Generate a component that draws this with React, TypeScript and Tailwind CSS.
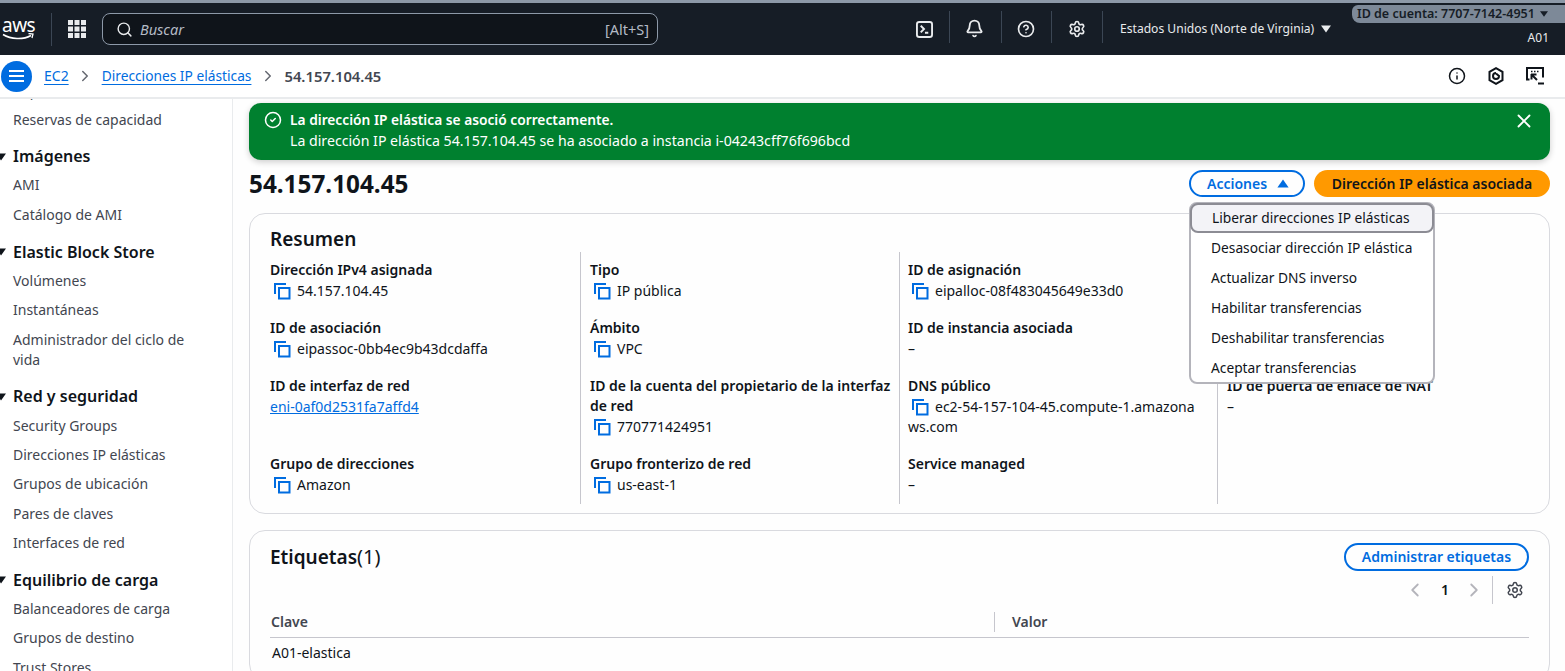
import { Bell, ChevronLeft, ChevronRight, CircleCheck, CircleHelp, Info, Search, Settings, X } from 'lucide-react';
import * as React from 'react';

const sidebarSections = [
  { title: 'Imágenes', items: ['AMI', 'Catálogo de AMI'] },
  { title: 'Elastic Block Store', items: ['Volúmenes', 'Instantáneas', 'Administrador del ciclo de vida'] },
  { title: 'Red y seguridad', items: ['Security Groups', 'Direcciones IP elásticas', 'Grupos de ubicación', 'Pares de claves', 'Interfaces de red'] },
  { title: 'Equilibrio de carga', items: ['Balanceadores de carga', 'Grupos de destino', 'Trust Stores'] },
];

const menuItems = [
  'Desasociar dirección IP elástica',
  'Actualizar DNS inverso',
  'Habilitar transferencias',
  'Deshabilitar transferencias',
  'Aceptar transferencias',
];

type Field = { label: string; value: string; copy?: boolean; link?: boolean; breakAll?: boolean };

const fields: Field[] = [
  { label: 'Dirección IPv4 asignada', value: '54.157.104.45', copy: true },
  { label: 'Tipo', value: 'IP pública', copy: true },
  { label: 'ID de asignación', value: 'eipalloc-08f483045649e33d0', copy: true },
  { label: 'Nombre de DNS inverso', value: '–' },
  { label: 'ID de asociación', value: 'eipassoc-0bb4ec9b43dcdaffa', copy: true },
  { label: 'Ámbito', value: 'VPC', copy: true },
  { label: 'ID de instancia asociada', value: '–' },
  { label: 'IP privada asociada', value: '–' },
  { label: 'ID de interfaz de red', value: 'eni-0af0d2531fa7affd4', link: true },
  { label: 'ID de la cuenta del propietario de la interfaz de red', value: '770771424951', copy: true },
  { label: 'DNS público', value: 'ec2-54-157-104-45.compute-1.amazonaws.com', copy: true, breakAll: true },
  { label: 'ID de puerta de enlace de NAT', value: '–' },
  { label: 'Grupo de direcciones', value: 'Amazon', copy: true },
  { label: 'Grupo fronterizo de red', value: 'us-east-1', copy: true },
  { label: 'Service managed', value: '–' },
];

function CopyIcon() {
  return (
    <svg width="18" height="18" viewBox="0 0 18 18" fill="none" stroke="#006ce0" strokeWidth="2" className="inline-block align-[-4px] mr-[6px] ml-[3px]">
      <path d="M2 12V2h11" />
      <rect x="6" y="6" width="10.5" height="10.5" />
    </svg>
  );
}

function Caret({ up, className }: { up?: boolean; className?: string }) {
  return (
    <svg width="10" height="8" viewBox="0 0 10 8" fill="currentColor" className={className}>
      <path d={up ? 'M5 0.5 10 7.5H0Z' : 'M0 0.5h10L5 7.5Z'} />
    </svg>
  );
}

function NavDivider() {
  return <div className="w-px h-[32px] bg-[#3b4654]" />;
}

function TopNav() {
  return (
    <div className="h-[55px] shrink-0 bg-[#161d26] border-t-[3px] border-[#8d99a8] flex items-center text-[#d5dbdb] relative">
      <div className="w-[52px] h-[33px] flex flex-col items-start justify-center border-r border-[#3b4654] pl-[2px]">
        <span className="text-[19px] leading-[15px] text-white tracking-[-0.5px]">aws</span>
        <svg width="32" height="8" viewBox="0 0 32 8" fill="none">
          <path d="M1 1.5c8 5 20 5.5 28 1" stroke="#fff" strokeWidth="1.5" />
          <path d="M26.500 0.500 31 1 30 5" stroke="#fff" strokeWidth="1.3" />
        </svg>
      </div>
      <svg width="18" height="18" viewBox="0 0 18 18" fill="#e9ebed" className="ml-[16px]">
        <path d="M0 0h5v5H0zM6.500 0h5v5h-5zM13 0h5v5h-5zM0 6.500h5v5H0zM6.500 6.500h5v5h-5zM13 6.500h5v5h-5zM0 13h5v5H0zM6.500 13h5v5h-5zM13 13h5v5h-5z" />
      </svg>
      <div className="ml-[16px] w-[556px] h-[32px] rounded-lg border border-[#8d99a8] bg-[#0f141a] flex items-center pl-[13px] pr-[8px]">
        <Search size={17} strokeWidth={2} className="text-[#e9ebed]" />
        <span className="ml-[7px] text-[14.500px] italic text-[#b4bbc5]">Buscar</span>
        <span className="ml-auto text-[14.500px] text-[#b4bbc5]">[Alt+S]</span>
      </div>
      <svg width="17" height="17" viewBox="0 0 18 18" fill="none" stroke="#e9ebed" strokeWidth="2" className="absolute left-[916px] top-[18px]">
        <rect x="1" y="1" width="16" height="16" rx="2.500" />
        <path d="M5 5l3.500 3.500L5 12M9.500 12.500H13" />
      </svg>
      <div className="absolute left-[949px] top-[8px]"><NavDivider /></div>
      <Bell size={19} strokeWidth={2.300} className="absolute left-[965px] top-[16px] text-[#e9ebed]" />
      <div className="absolute left-[1001px] top-[8px]"><NavDivider /></div>
      <CircleHelp size={18} strokeWidth={2.200} className="absolute left-[1017px] top-[17px] text-[#e9ebed]" />
      <div className="absolute left-[1051px] top-[8px]"><NavDivider /></div>
      <Settings size={18} strokeWidth={2.200} className="absolute left-[1068px] top-[17px] text-[#e9ebed]" />
      <div className="absolute left-[1102px] top-[8px]"><NavDivider /></div>
      <div className="absolute left-[1120px] top-[16px] flex items-center gap-[7px] text-[12.100px] leading-5 text-[#e9ebed]">
        Estados Unidos (Norte de Virginia)
        <Caret className="text-[#e9ebed]" />
      </div>
      <div className="absolute right-0 top-[2px] w-[213px] h-[18px] bg-[#7d8998] rounded-bl-lg rounded-tl-md flex items-center pl-[5px] gap-[5px] text-[12.500px] font-semibold text-[#161d26]">
        ID de cuenta: 7707-7142-4951
        <Caret className="w-[8px]" />
      </div>
      <span className="absolute right-[16px] top-[27px] text-[12px] leading-4 text-[#e9ebed]">A01</span>
    </div>
  );
}

function Breadcrumbs() {
  return (
    <div className="h-[44px] shrink-0 bg-white border-b-2 border-[#e9ebed] flex items-center pl-[1px] pr-[21px] text-[13.750px]">
      <div className="w-[31px] h-[31px] rounded-full bg-[#006ce0] flex flex-col items-center justify-center gap-[3px]">
        <span className="w-[15px] h-[2px] bg-white" />
        <span className="w-[15px] h-[2px] bg-white" />
        <span className="w-[15px] h-[2px] bg-white" />
      </div>
      <a className="ml-[12px] text-[14px] text-[#006ce0] underline underline-offset-[3px]">EC2</a>
      <ChevronRight size={18} strokeWidth={2} className="mx-[7.500px] text-[#656871]" />
      <a className="text-[#006ce0] underline underline-offset-[3px]">Direcciones IP elásticas</a>
      <ChevronRight size={18} strokeWidth={2} className="mx-[7.500px] text-[#656871]" />
      <span className="text-[14.800px] font-semibold text-[#424650]">54.157.104.45</span>
      <div className="ml-auto flex items-center gap-[21px] text-[#0f141a]">
        <Info size={18} strokeWidth={2} />
        <svg width="18" height="18" viewBox="0 0 18 18" fill="none" stroke="currentColor" strokeWidth="2">
          <path d="M9 1.200l6.500 3.700v8.200L9 16.800l-6.500-3.700V4.900z" />
          <path d="M9 6a3 3 0 1 0 3 3L9 6.500" />
        </svg>
        <svg width="18" height="18" viewBox="0 0 18 18" fill="none" stroke="currentColor" strokeWidth="2">
          <path d="M3.500 12.500H1V1h16v9.500" />
          <path d="M5 4.500h1.500M8 4.500h1.500M11 4.500h1.500" strokeWidth="1.500" />
          <path d="M5.500 7.500l5.500 5.500M5 7.500h5.500M5.500 7v5.500M12 16.500h6" />
        </svg>
      </div>
    </div>
  );
}

function Sidebar() {
  return (
    <div className="w-[233px] shrink-0 border-r border-[#e9ebed] overflow-hidden text-[14px] text-[#424650]">
      <div className="-mt-[23px] pl-[13px]">
        <div className="h-[29.100px] flex items-center">Capacidad dedicada</div>
        <div className="h-[29.100px] flex items-center">Reservas de capacidad</div>
        {sidebarSections.map((section) => (
          <div key={section.title} className="mt-[7.500px]">
            <div className="h-[29.100px] flex items-center font-semibold text-[16px] text-[#0f141a] relative">
              <Caret className="absolute -left-[17px] top-[11px]" />
              {section.title}
            </div>
            {section.items.map((item) => (
              <div key={item} className="py-[4.700px] leading-5 w-[190px]">{item}</div>
            ))}
          </div>
        ))}
      </div>
    </div>
  );
}

function SummaryCell({ field, col }: { field: Field; col: number }) {
  const cellClass =
    col === 0
      ? 'pt-2 pb-[9px] pr-2'
      : col === 2
        ? 'pt-2 pb-[9px] pl-[8px] pr-2 border-l border-[#c6c6cd]'
        : 'pt-2 pb-[9px] pl-[9px] pr-2 border-l border-[#c6c6cd]';
  return (
    <div className={cellClass}>
      <div className="font-semibold mb-px">{field.label}</div>
      {field.link ? (
        <a className="text-[#006ce0] underline">{field.value}</a>
      ) : (
        <div className={field.breakAll ? 'break-all pr-[14px]' : ''}>
          {field.copy && <CopyIcon />}
          {field.value}
        </div>
      )}
    </div>
  );
}

function ActionsMenu() {
  return (
    <div className="absolute left-0 top-[32px] z-10 w-[246px] h-[182px] bg-white rounded-lg border-2 border-[#b4b4bb] text-[13.750px] text-[#0f141a]">
      <div className="-m-[1px] mb-0 h-[30px] pl-[20px] flex items-center bg-[#f3f3f7] rounded-lg border-2 border-[#8c8c94]">Liberar direcciones IP elásticas</div>
      <div className="pl-[20px]">
        {menuItems.map((item) => (
          <div key={item} className="h-[30.100px] flex items-center">{item}</div>
        ))}
      </div>
    </div>
  );
}

export default function App() {
  return (
    <div className="h-[671px] w-[1565px] overflow-hidden flex flex-col bg-white text-[14px] leading-5 text-[#0f141a] font-['Noto_Sans',sans-serif]">
      <TopNav />
      <Breadcrumbs />
      <div className="flex flex-1 min-h-0">
        <Sidebar />
        <div className="flex-1 pl-[16px] pr-[15px] pt-[4px] bg-[#fefefe]">
          {/* Flash message */}
          <div className="h-[57px] rounded-xl bg-[#00802f] text-white flex pl-[15px] pr-[15px] pt-[6px] shadow-[0_2px_6px_rgba(0,0,0,0.2)]">
            <CircleCheck size={18} strokeWidth={2} className="mt-[2px] mr-[8px] shrink-0" />
            <div className="leading-[22px]">
              <div className="font-semibold text-[13.750px]">La dirección IP elástica se asoció correctamente.</div>
              <div className="-mt-px text-[14.150px]">La dirección IP elástica 54.157.104.45 se ha asociado a instancia i-04243cff76f696bcd</div>
            </div>
            <X size={22} strokeWidth={2} className="ml-auto mt-[1px]" />
          </div>

          {/* Page header */}
          <div className="mt-[10px] h-[27px] flex items-center">
            <h1 className="text-[24.300px] font-bold">54.157.104.45</h1>
            <div className="ml-auto relative">
              <button className="w-[116px] h-[27px] rounded-full border-2 border-[#006ce0] text-[#006ce0] font-semibold flex items-center pl-[16px] gap-[10px]">
                Acciones
                <Caret up className="w-[12px] h-[9px]" />
              </button>
              <ActionsMenu />
            </div>
            <button className="ml-[9px] w-[236px] h-[27px] rounded-full bg-[#ff9900] font-semibold">Dirección IP elástica asociada</button>
          </div>

          {/* Summary */}
          <div className="mt-[16px] h-[301px] rounded-2xl border border-[#d9dadf] pt-3 pl-[20px] pr-[20px]">
            <h2 className="h-[26px] text-[19px] font-semibold leading-[26px]">Resumen</h2>
            <div className="grid grid-cols-[310px_319px_318px_1fr]">
              {fields.map((field, i) => (
                <SummaryCell key={field.label} field={field} col={i % 4} />
              ))}
              <div className="border-l border-[#c6c6cd]" />
            </div>
          </div>

          {/* Tags */}
          <div className="mt-[16px] h-[150px] rounded-2xl border border-[#d9dadf] pt-3 pl-[20px] pr-[20px]">
            <div className="h-[28px] flex items-center">
              <h2 className="text-[19px] font-semibold">Etiquetas<span className="text-[20px] font-normal">(1)</span></h2>
              <button className="ml-auto w-[185px] h-[28px] rounded-full border-2 border-[#006ce0] text-[#006ce0] font-semibold">Administrar etiquetas</button>
            </div>
            <div className="mt-[5px] h-[28px] flex items-center justify-end">
              <ChevronLeft size={22} strokeWidth={2} className="text-[#b4b4bb]" />
              <span className="ml-[15px] mr-[14px] font-semibold">1</span>
              <ChevronRight size={22} strokeWidth={2} className="text-[#b4b4bb]" />
              <div className="ml-[7px] mr-[13px] w-px h-[28px] bg-[#c6c6cd]" />
              <Settings size={18} strokeWidth={2} className="mr-[5px] text-[#424650]" />
            </div>
            <div className="h-[34px] pt-[2px] border-b border-[#c6c6cd] flex items-center font-semibold text-[#424650]">
              <div className="w-[725px] pl-[1px] border-r border-[#c6c6cd]">Clave</div>
              <div className="pl-[17px]">Valor</div>
            </div>
            <div className="h-[30px] flex items-center pl-[2px]">A01-elastica</div>
          </div>
        </div>
      </div>
    </div>
  );
}
